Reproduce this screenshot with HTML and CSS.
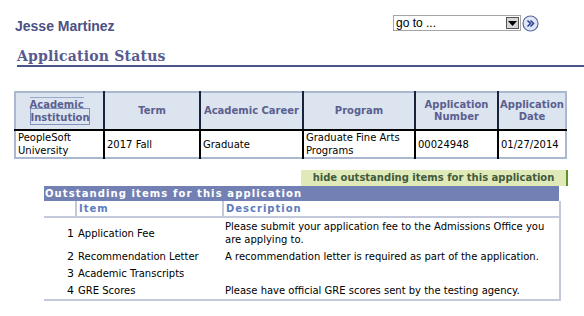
FILE: index.html
```html
<!DOCTYPE html>
<html lang="en">
<head>
    <meta charset="UTF-8">
    <title>Application Status</title>
    <link rel="stylesheet" href="styles.css">
</head>
<body>
<div class="top">
    <div class="name">Jesse Martinez</div>
    <div class="goto">
        <div class="select">
            <span>go to ...</span>
            <span class="drop"><svg width="9" height="5" viewBox="0 0 9 5"><path d="M0 0h9L4.5 5z" fill="#000"/></svg></span>
        </div>
        <span class="go">
            <svg width="17" height="17" viewBox="0 0 17 17">
                <circle cx="8.5" cy="8.5" r="7.5" fill="#dfe6f7" stroke="#5b6a9a" stroke-width="1.2"/>
                <path d="M5.5 5.5l3 3-3 3M8.5 5.5l3 3-3 3" fill="none" stroke="#2c3f8c" stroke-width="1.5"/>
            </svg>
        </span>
    </div>
</div>
<h1 class="title">Application Status</h1>

<table class="status">
    <colgroup>
        <col class="c1"><col class="c2"><col class="c3"><col class="c4"><col class="c5"><col class="c6">
    </colgroup>
    <tr>
        <th><span class="link"><span class="l1">Academic</span><span class="l2">Institution</span></span></th>
        <th>Term</th>
        <th>Academic Career</th>
        <th>Program</th>
        <th>Application Number</th>
        <th>Application Date</th>
    </tr>
    <tr>
        <td>PeopleSoft University</td>
        <td>2017 Fall</td>
        <td>Graduate</td>
        <td>Graduate Fine Arts Programs</td>
        <td>00024948</td>
        <td>01/27/2014</td>
    </tr>
</table>

<div class="items">
    <div class="hide-row"><span class="hide">hide outstanding items for this application</span></div>
    <div class="grid-title">Outstanding items for this application</div>
    <table class="grid">
        <colgroup>
            <col class="n"><col class="item"><col class="desc">
        </colgroup>
        <tr>
            <th></th>
            <th>Item</th>
            <th>Description</th>
        </tr>
        <tr>
            <td class="n">1</td>
            <td>Application Fee</td>
            <td>Please submit your application fee to the Admissions Office you are applying to.</td>
        </tr>
        <tr>
            <td class="n">2</td>
            <td>Recommendation Letter</td>
            <td>A recommendation letter is required as part of the application.</td>
        </tr>
        <tr>
            <td class="n">3</td>
            <td>Academic Transcripts</td>
            <td></td>
        </tr>
        <tr>
            <td class="n">4</td>
            <td>GRE Scores</td>
            <td>Please have official GRE scores sent by the testing agency.</td>
        </tr>
    </table>
</div>
</body>
</html>
```
FILE: styles.css
```css
* {
    margin: 0;
    padding: 0;
}

body {
    font-family: "DejaVu Sans", Verdana, sans-serif;
    font-size: 10px;
    color: #000;
    background: #fff;
}

.top {
    display: flex;
    justify-content: space-between;
    padding: 12px 45px 0 15px;
}

.name {
    padding-top: 6px;
    font-family: "Liberation Sans", Arial, sans-serif;
    font-size: 14px;
    font-weight: bold;
    color: #4c5083;
}

.goto {
    display: flex;
    align-items: center;
    gap: 1px;
}

.select {
    display: flex;
    align-items: center;
    justify-content: space-between;
    width: 124px;
    height: 14px;
    border: 1px solid #a5a5a5;
    font-family: "Liberation Sans", Arial, sans-serif;
    font-size: 12px;
    padding-left: 2px;
}

.drop {
    display: flex;
    align-items: center;
    justify-content: center;
    width: 11px;
    height: 10px;
    margin-right: 1px;
    background: #d6d6d6;
    border: 1px solid #555;
}

.go {
    display: flex;
}

.title {
    margin: 14px 0 0 17px;
    padding-bottom: 1px;
    border-bottom: 2px solid #4a5688;
    font-family: "DejaVu Serif", Georgia, serif;
    font-size: 14px;
    font-weight: bold;
    letter-spacing: 0.2px;
    color: #575b8e;
}

.status {
    margin: 24px 0 0 14px;
    width: 551px;
    table-layout: fixed;
    border-collapse: collapse;
    border: 2px solid #a9b8cf;
}

.status .c1 { width: 89px; }
.status .c2 { width: 96px; }
.status .c3 { width: 103px; }
.status .c4 { width: 112px; }
.status .c5 { width: 83px; }
.status .c6 { width: 68px; }

.status th {
    height: 36px;
    background: #dce4ef;
    color: #5b5f8f;
    font-weight: bold;
    text-align: center;
    border-right: 2px solid #18223f;
    border-bottom: 2px solid #000;
    line-height: 12px;
}

.status th:last-child,
.status td:last-child {
    border-right: none;
}

.status td {
    height: 26px;
    padding: 0 2px;
    border-right: 2px solid #000;
    line-height: 13px;
}

.status .link {
    display: inline-block;
    width: 60px;
    text-align: left;
}

.status .l1 {
    display: block;
    width: 54px;
    padding-top: 1px;
    border-top: 1px solid #9aa8c8;
}

.status .l2 {
    display: block;
    margin-top: -3px;
    padding-top: 3px;
    border: 1px solid #8092bb;
}

.items {
    margin: 11px 0 0 44px;
    width: 524px;
}

.hide-row {
    display: flex;
    justify-content: flex-end;
}

.hide {
    display: block;
    width: 265px;
    height: 16px;
    line-height: 16px;
    background: #dfeab8;
    border-right: 2px solid #5f9227;
    color: #3f5a3e;
    font-weight: bold;
    white-space: nowrap;
    text-align: center;
}

.grid-title {
    width: 514px;
    height: 15px;
    line-height: 15px;
    padding-left: 1px;
    background: #7380b4;
    color: #fff;
    font-weight: bold;
    letter-spacing: 1.1px;
    white-space: nowrap;
}

.grid {
    width: 517px;
    table-layout: fixed;
    border-collapse: collapse;
    border-right: 2px solid #c3c9db;
    border-bottom: 2px solid #c3c9db;
}

.grid .n { width: 32px; }
.grid .item { width: 147px; }

.grid th {
    height: 15px;
    padding-left: 2px;
    text-align: left;
    color: #5c7dbd;
    font-weight: bold;
    letter-spacing: 1px;
    border-left: 2px solid #c3c9db;
    border-bottom: 2px solid #c3c9db;
}

.grid th:first-child {
    border-left: none;
}

.grid td {
    padding: 2px;
    line-height: 13px;
    vertical-align: middle;
}

.grid td.n {
    font-size: 11px;
    text-align: right;
}
```
